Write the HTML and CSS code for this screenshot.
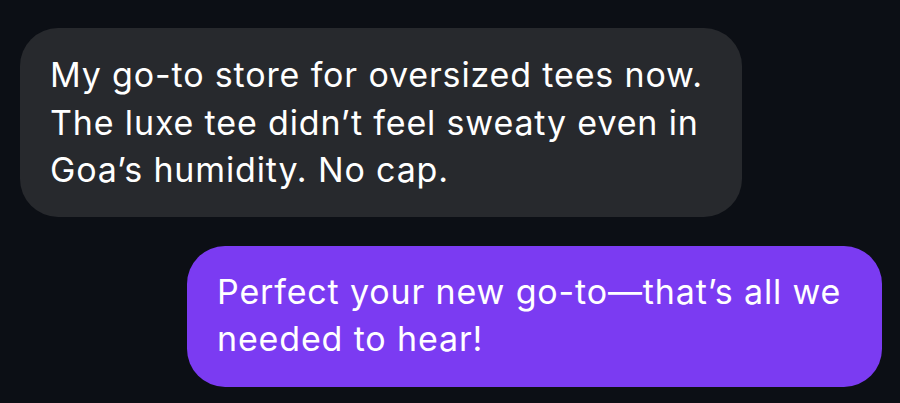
FILE: index.html
```html
<!DOCTYPE html>
<html>
<head>
<meta charset="utf-8">
<link rel="stylesheet" href="styles.css">
</head>
<body>
<div class="chat">
  <div class="bubble incoming">My go-to store for oversized tees now.<br>The luxe tee didn’t feel sweaty even in<br>Goa’s humidity. No cap.</div>
  <div class="bubble outgoing">Perfect your new go-to—that’s all we<br>needed to hear!</div>
</div>
</body>
</html>
```
FILE: styles.css
```css
html, body {
  margin: 0;
  padding: 0;
  background: #0c0f15;
}
.chat {
  display: flex;
  flex-direction: column;
  gap: 29px;
  padding: 28px 18px 0 20px;
  font-family: Inter, "Noto Sans", sans-serif;
}
.bubble {
  font-size: 34px;
  line-height: 47.5px;
  letter-spacing: 0.85px;
  color: #ffffff;
  border-radius: 38px;
  box-sizing: border-box;
  white-space: nowrap;
}
.incoming {
  align-self: flex-start;
  width: 722px;
  background: #27292d;
  padding: 23px 30px 23px 30px;
}
.outgoing {
  align-self: flex-end;
  width: 695px;
  background: #7b3bf2;
  padding: 22px 30px 24px 30px;
}
```
